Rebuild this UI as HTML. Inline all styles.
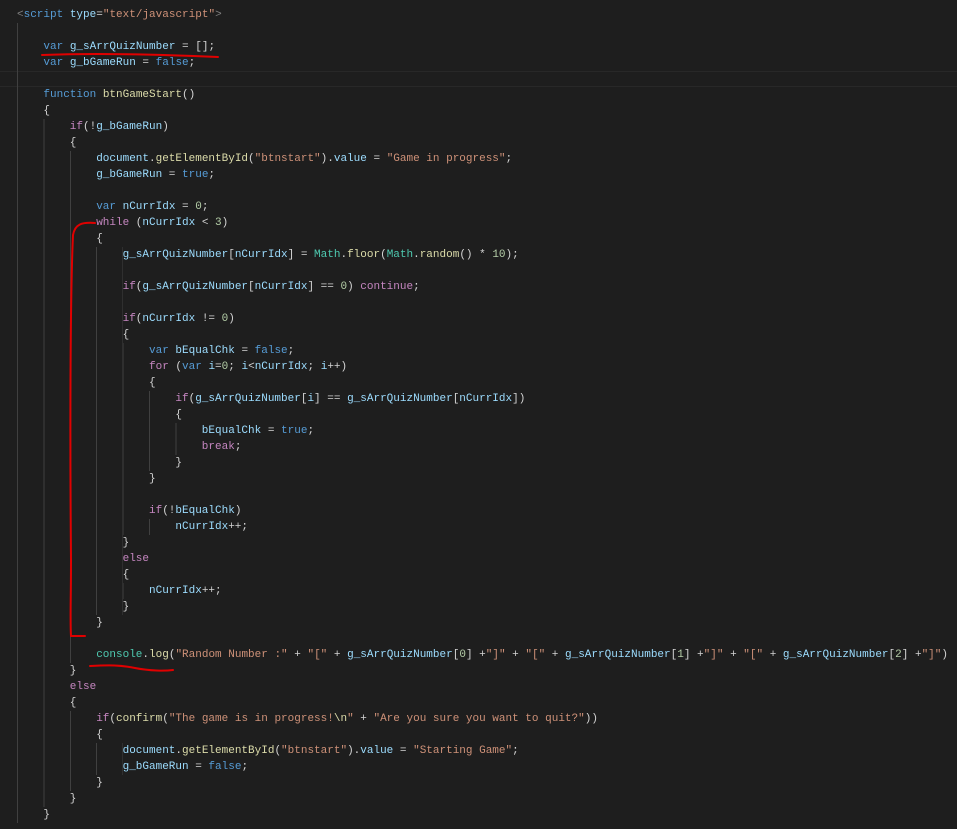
<!DOCTYPE html>
<html><head><meta charset="utf-8"><style>
html,body{margin:0;padding:0;background:#1e1e1e;width:957px;height:829px;overflow:hidden;position:relative}
.l{position:absolute;left:17px;height:16px;line-height:16px;font-family:"Liberation Mono",monospace;font-size:11px;color:#d4d4d4;white-space:pre}
.g{display:inline-block;height:16px;vertical-align:top;background:repeating-linear-gradient(to right,#404040 0 1px,transparent 1px 26.4px)}
.k{color:#569cd6}.c{color:#c586c0}.v{color:#9cdcfe}.f{color:#dcdcaa}.s{color:#ce9178}.n{color:#b5cea8}.t{color:#4ec9b0}.p{color:#808080}
.cur{position:absolute;left:0;top:71px;width:957px;height:14px;border-top:1px solid #282828;border-bottom:1px solid #282828}
</style></head><body>
<div class="cur"></div>
<div class="l" style="top:7px"><span class="p">&lt;</span><span class="k">script</span> <span class="v">type</span>=<span class="s">"text/javascript"</span><span class="p">&gt;</span></div>
<div class="l" style="top:23px"><span class="g" style="width:26.4px"></span></div>
<div class="l" style="top:39px"><span class="g" style="width:26.4px"></span><span class="k">var</span> <span class="v">g_sArrQuizNumber</span> = [];</div>
<div class="l" style="top:55px"><span class="g" style="width:26.4px"></span><span class="k">var</span> <span class="v">g_bGameRun</span> = <span class="k">false</span>;</div>
<div class="l" style="top:71px"><span class="g" style="width:26.4px"></span></div>
<div class="l" style="top:87px"><span class="g" style="width:26.4px"></span><span class="k">function</span> <span class="f">btnGameStart</span>()</div>
<div class="l" style="top:103px"><span class="g" style="width:26.4px"></span>{</div>
<div class="l" style="top:119px"><span class="g" style="width:52.8px"></span><span class="c">if</span>(!<span class="v">g_bGameRun</span>)</div>
<div class="l" style="top:135px"><span class="g" style="width:52.8px"></span>{</div>
<div class="l" style="top:151px"><span class="g" style="width:79.2px"></span><span class="v">document</span>.<span class="f">getElementById</span>(<span class="s">"btnstart"</span>).<span class="v">value</span> = <span class="s">"Game in progress"</span>;</div>
<div class="l" style="top:167px"><span class="g" style="width:79.2px"></span><span class="v">g_bGameRun</span> = <span class="k">true</span>;</div>
<div class="l" style="top:183px"><span class="g" style="width:79.2px"></span></div>
<div class="l" style="top:199px"><span class="g" style="width:79.2px"></span><span class="k">var</span> <span class="v">nCurrIdx</span> = <span class="n">0</span>;</div>
<div class="l" style="top:215px"><span class="g" style="width:79.2px"></span><span class="c">while</span> (<span class="v">nCurrIdx</span> &lt; <span class="n">3</span>)</div>
<div class="l" style="top:231px"><span class="g" style="width:79.2px"></span>{</div>
<div class="l" style="top:247px"><span class="g" style="width:105.6px"></span><span class="v">g_sArrQuizNumber</span>[<span class="v">nCurrIdx</span>] = <span class="t">Math</span>.<span class="f">floor</span>(<span class="t">Math</span>.<span class="f">random</span>() * <span class="n">10</span>);</div>
<div class="l" style="top:263px"><span class="g" style="width:105.6px"></span></div>
<div class="l" style="top:279px"><span class="g" style="width:105.6px"></span><span class="c">if</span>(<span class="v">g_sArrQuizNumber</span>[<span class="v">nCurrIdx</span>] == <span class="n">0</span>) <span class="c">continue</span>;</div>
<div class="l" style="top:295px"><span class="g" style="width:105.6px"></span></div>
<div class="l" style="top:311px"><span class="g" style="width:105.6px"></span><span class="c">if</span>(<span class="v">nCurrIdx</span> != <span class="n">0</span>)</div>
<div class="l" style="top:327px"><span class="g" style="width:105.6px"></span>{</div>
<div class="l" style="top:343px"><span class="g" style="width:132px"></span><span class="k">var</span> <span class="v">bEqualChk</span> = <span class="k">false</span>;</div>
<div class="l" style="top:359px"><span class="g" style="width:132px"></span><span class="c">for</span> (<span class="k">var</span> <span class="v">i</span>=<span class="n">0</span>; <span class="v">i</span>&lt;<span class="v">nCurrIdx</span>; <span class="v">i</span>++)</div>
<div class="l" style="top:375px"><span class="g" style="width:132px"></span>{</div>
<div class="l" style="top:391px"><span class="g" style="width:158.4px"></span><span class="c">if</span>(<span class="v">g_sArrQuizNumber</span>[<span class="v">i</span>] == <span class="v">g_sArrQuizNumber</span>[<span class="v">nCurrIdx</span>])</div>
<div class="l" style="top:407px"><span class="g" style="width:158.4px"></span>{</div>
<div class="l" style="top:423px"><span class="g" style="width:184.8px"></span><span class="v">bEqualChk</span> = <span class="k">true</span>;</div>
<div class="l" style="top:439px"><span class="g" style="width:184.8px"></span><span class="c">break</span>;</div>
<div class="l" style="top:455px"><span class="g" style="width:158.4px"></span>}</div>
<div class="l" style="top:471px"><span class="g" style="width:132px"></span>}</div>
<div class="l" style="top:487px"><span class="g" style="width:132px"></span></div>
<div class="l" style="top:503px"><span class="g" style="width:132px"></span><span class="c">if</span>(!<span class="v">bEqualChk</span>)</div>
<div class="l" style="top:519px"><span class="g" style="width:158.4px"></span><span class="v">nCurrIdx</span>++;</div>
<div class="l" style="top:535px"><span class="g" style="width:105.6px"></span>}</div>
<div class="l" style="top:551px"><span class="g" style="width:105.6px"></span><span class="c">else</span></div>
<div class="l" style="top:567px"><span class="g" style="width:105.6px"></span>{</div>
<div class="l" style="top:583px"><span class="g" style="width:132px"></span><span class="v">nCurrIdx</span>++;</div>
<div class="l" style="top:599px"><span class="g" style="width:105.6px"></span>}</div>
<div class="l" style="top:615px"><span class="g" style="width:79.2px"></span>}</div>
<div class="l" style="top:631px"><span class="g" style="width:79.2px"></span></div>
<div class="l" style="top:647px"><span class="g" style="width:79.2px"></span><span class="t">console</span>.<span class="f">log</span>(<span class="s">"Random Number :"</span> + <span class="s">"["</span> + <span class="v">g_sArrQuizNumber</span>[<span class="n">0</span>] +<span class="s">"]"</span> + <span class="s">"["</span> + <span class="v">g_sArrQuizNumber</span>[<span class="n">1</span>] +<span class="s">"]"</span> + <span class="s">"["</span> + <span class="v">g_sArrQuizNumber</span>[<span class="n">2</span>] +<span class="s">"]"</span>)</div>
<div class="l" style="top:663px"><span class="g" style="width:52.8px"></span>}</div>
<div class="l" style="top:679px"><span class="g" style="width:52.8px"></span><span class="c">else</span></div>
<div class="l" style="top:695px"><span class="g" style="width:52.8px"></span>{</div>
<div class="l" style="top:711px"><span class="g" style="width:79.2px"></span><span class="c">if</span>(<span class="f">confirm</span>(<span class="s">"The game is in progress!</span><span class="f">\n</span><span class="s">"</span> + <span class="s">"Are you sure you want to quit?"</span>))</div>
<div class="l" style="top:727px"><span class="g" style="width:79.2px"></span>{</div>
<div class="l" style="top:743px"><span class="g" style="width:105.6px"></span><span class="v">document</span>.<span class="f">getElementById</span>(<span class="s">"btnstart"</span>).<span class="v">value</span> = <span class="s">"Starting Game"</span>;</div>
<div class="l" style="top:759px"><span class="g" style="width:105.6px"></span><span class="v">g_bGameRun</span> = <span class="k">false</span>;</div>
<div class="l" style="top:775px"><span class="g" style="width:79.2px"></span>}</div>
<div class="l" style="top:791px"><span class="g" style="width:52.8px"></span>}</div>
<div class="l" style="top:807px"><span class="g" style="width:26.4px"></span>}</div>
<svg width="957" height="829" style="position:absolute;left:0;top:0" fill="none" stroke="#e00000" stroke-width="2" stroke-linecap="round">
<path d="M42,55 C90,53 150,54 218,57"/>
<path d="M95,223 C82,222 75,224 73,235 C70,300 70,450 71,560 C71,600 70,620 71,636 L85,636"/>
<path d="M90,666 C110,665 120,665 135,668 C150,671 165,671 173,670"/>
</svg>
</body></html>
